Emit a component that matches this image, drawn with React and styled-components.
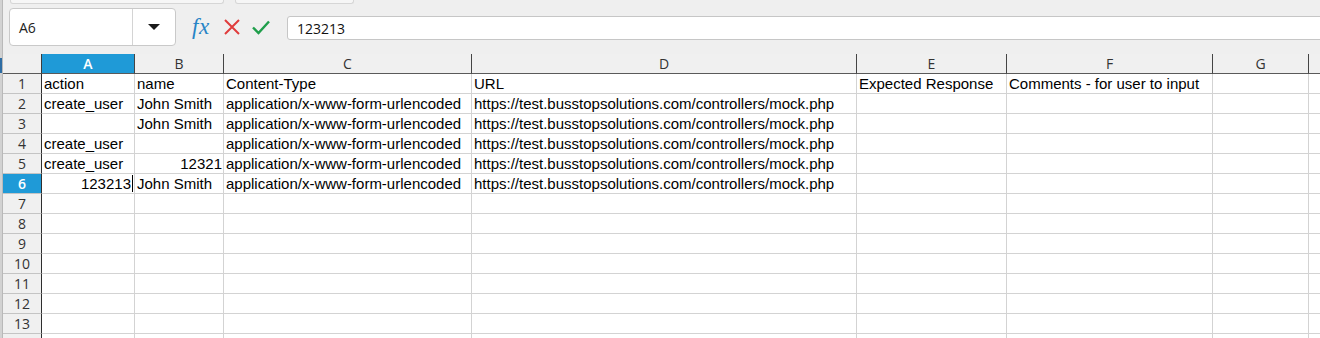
import React from 'react';
import styled, { createGlobalStyle } from 'styled-components';

const GlobalStyle = createGlobalStyle`
  html, body {
    margin: 0;
    padding: 0;
    background: #efefef;
    overflow: hidden;
  }
  body {
    width: 1320px;
    height: 338px;
  }
`;

const COLS = [
  { key: 'A', width: 93 },
  { key: 'B', width: 89 },
  { key: 'C', width: 248 },
  { key: 'D', width: 385 },
  { key: 'E', width: 150 },
  { key: 'F', width: 206 },
  { key: 'G', width: 96 },
  { key: '', width: 40 },
];

const URL = 'https://test.busstopsolutions.com/controllers/mock.php';
const CT = 'application/x-www-form-urlencoded';

const ROWS = [
  ['action', 'name', 'Content-Type', 'URL', 'Expected Response', 'Comments - for user to input'],
  ['create_user', 'John Smith', CT, URL],
  ['', 'John Smith', CT, URL],
  ['create_user', '', CT, URL],
  ['create_user', { num: '12321' }, CT, URL],
  [{ num: '123213', editing: true }, 'John Smith', CT, URL],
  [], [], [], [], [], [], [], [],
];

const SELECTED_COL = 'A';
const SELECTED_ROW = 6;

const Page = styled.div`
  display: flex;
  width: 1320px;
  height: 338px;
  overflow: hidden;
  font-family: "Liberation Sans", Arial, sans-serif;
`;

const EdgeStrip = styled.div`
  width: 3px;
  flex: none;
  display: flex;
  flex-direction: column;
  background: #d2d2d2;
  border-right: 1px solid #b9b9b9;
  box-sizing: border-box;
`;

const EdgeMark = styled.div`
  margin-top: 58px;
  height: 15px;
  background: #2e6da4;
`;

const Main = styled.div`
  flex: 1;
  min-width: 0;
  display: flex;
  flex-direction: column;
`;

const TabStrip = styled.div`
  height: 4px;
  display: flex;
  gap: 11px;
  padding-left: 7px;
`;

const Tab = styled.div`
  width: ${(p) => p.$w}px;
  height: 3px;
  background: #f6f6f6;
  border: 1px solid #d6d6d6;
  border-top: none;
  border-radius: 0 0 3px 3px;
`;

const Toolbar = styled.div`
  display: flex;
  align-items: flex-start;
  padding: 4px 0 8px 6px;
  height: 50px;
  box-sizing: border-box;
`;

const NameBox = styled.div`
  width: 167px;
  height: 38px;
  box-sizing: border-box;
  display: flex;
  background: #fff;
  border: 1px solid #c9c9c9;
  border-radius: 4px;
`;

const NameField = styled.div`
  width: 123px;
  border-right: 1px solid #d4d4d4;
  display: flex;
  align-items: center;
  padding-left: 9px;
  box-sizing: border-box;
  font-family: "Open Sans", "Noto Sans", sans-serif;
  font-size: 14px;
  color: #222;
`;

const DropButton = styled.div`
  flex: 1;
  display: flex;
  align-items: center;
  justify-content: center;
`;

const Triangle = styled.div`
  width: 0;
  height: 0;
  border-left: 6px solid transparent;
  border-right: 6px solid transparent;
  border-top: 6px solid #1a1a1a;
`;

const IconRow = styled.div`
  display: flex;
  align-items: center;
  height: 38px;
  margin-left: 16px;
  gap: 10px;
`;

const Fx = styled.span`
  font-family: "Liberation Serif", "DejaVu Serif", serif;
  font-style: italic;
  font-size: 23px;
  color: #2784c6;
  letter-spacing: 0.5px;
  width: 21px;
  margin-top: -1px;
`;

const FormulaInput = styled.div`
  flex: 1;
  margin: 8px -8px 0 16px;
  height: 24px;
  box-sizing: border-box;
  background: #fff;
  border: 1px solid #c6c6c6;
  border-radius: 3px;
  display: flex;
  align-items: center;
  padding-left: 9px;
  font-family: "Open Sans", "Noto Sans", sans-serif;
  font-size: 14px;
  color: #111;
`;

const Grid = styled.div`
  display: grid;
  grid-template-columns: 39px ${COLS.map((c) => `${c.width}px`).join(' ')};
  grid-auto-rows: 20px;
`;

const Corner = styled.div`
  background: #f0f0f0;
  border-right: 1px solid #3c3c3c;
  border-bottom: 1px solid #5a5a5a;
`;

const ColHead = styled.div`
  display: flex;
  align-items: center;
  justify-content: center;
  font-family: "Open Sans", "Noto Sans", sans-serif;
  font-size: 14px;
  color: ${(p) => (p.$selected ? '#fff' : '#333')};
  font-weight: ${(p) => (p.$selected ? 600 : 400)};
  background: ${(p) => (p.$selected ? '#1f9ad7' : '#f0f0f0')};
  border-right: 1px solid #454545;
  border-bottom: 1px solid #5a5a5a;
  overflow: hidden;
`;

const RowHead = styled.div`
  display: flex;
  align-items: center;
  justify-content: center;
  font-family: "Open Sans", "Noto Sans", sans-serif;
  font-size: 14px;
  color: ${(p) => (p.$selected ? '#fff' : '#333')};
  font-weight: ${(p) => (p.$selected ? 600 : 400)};
  background: ${(p) => (p.$selected ? '#1f9ad7' : '#f0f0f0')};
  border-right: 1px solid #2e2e2e;
  border-bottom: 1px solid #c4c4c4;
`;

const Cell = styled.div`
  display: flex;
  align-items: center;
  justify-content: ${(p) => (p.$right ? 'flex-end' : 'flex-start')};
  padding: 0 ${(p) => (p.$right ? '1px' : '0')} 0 2px;
  background: #fff;
  border-right: 1px solid #d3d3d3;
  border-bottom: 1px solid #d3d3d3;
  font-size: 15px;
  color: #000;
  white-space: nowrap;
  overflow: hidden;
`;

const Caret = styled.span`
  display: inline-block;
  width: 1px;
  height: 17px;
  margin-left: 1px;
  background: #000;
`;

function CancelIcon() {
  return (
    <svg width="18" height="18" viewBox="0 0 18 18">
      <path d="M2 2 L16 16 M16 2 L2 16" stroke="#e03c3c" strokeWidth="2" fill="none" />
    </svg>
  );
}

function AcceptIcon() {
  return (
    <svg width="20" height="18" viewBox="0 0 20 18">
      <path d="M2 9.5 L7.5 15 L18 3.5" stroke="#1f9e4b" strokeWidth="2.4" fill="none" />
    </svg>
  );
}

function renderCell(value, r, c) {
  if (value && typeof value === 'object') {
    return (
      <Cell key={`${r}-${c}`} $right>
        {value.num}
        {value.editing && <Caret />}
      </Cell>
    );
  }
  return <Cell key={`${r}-${c}`}>{value || ''}</Cell>;
}

export default function App() {
  return (
    <>
      <GlobalStyle />
      <Page>
        <EdgeStrip>
          <EdgeMark />
        </EdgeStrip>
        <Main>
          <TabStrip>
            <Tab $w={212} />
            <Tab $w={117} />
          </TabStrip>
          <Toolbar>
            <NameBox>
              <NameField>A6</NameField>
              <DropButton>
                <Triangle />
              </DropButton>
            </NameBox>
            <IconRow>
              <Fx>fx</Fx>
              <CancelIcon />
              <AcceptIcon />
            </IconRow>
            <FormulaInput>123213</FormulaInput>
          </Toolbar>
          <Grid>
            <Corner />
            {COLS.map((col, i) => (
              <ColHead key={`h${i}`} $selected={col.key === SELECTED_COL}>
                {col.key}
              </ColHead>
            ))}
            {ROWS.map((row, r) => (
              <React.Fragment key={`r${r}`}>
                <RowHead $selected={r + 1 === SELECTED_ROW}>{r + 1}</RowHead>
                {COLS.map((_, c) => renderCell(row[c], r, c))}
              </React.Fragment>
            ))}
          </Grid>
        </Main>
      </Page>
    </>
  );
}
